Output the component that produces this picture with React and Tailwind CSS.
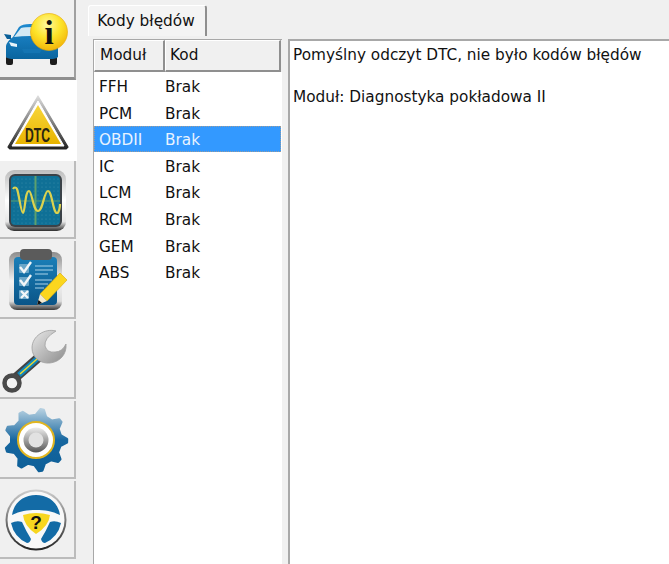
const modules = ['FFH', 'PCM', 'OBDII', 'IC', 'LCM', 'RCM', 'GEM', 'ABS'];

function CarIcon() {
  return (
    <svg width="76" height="78" viewBox="0 0 76 78">
      <defs>
        <linearGradient id="carBody" x1="0" y1="0" x2="0" y2="1">
          <stop offset="0" stopColor="#1f8ad0" />
          <stop offset="1" stopColor="#0a659f" />
        </linearGradient>
        <radialGradient id="infoBall" cx="0.45" cy="0.3" r="0.8">
          <stop offset="0" stopColor="#fff8a0" />
          <stop offset="0.45" stopColor="#fde42a" />
          <stop offset="1" stopColor="#efa800" />
        </radialGradient>
      </defs>
      <rect x="6" y="56" width="7" height="9" rx="2" fill="#1c1c1c" />
      <rect x="50" y="56" width="7" height="9" rx="2" fill="#1c1c1c" />
      <path d="M6 57 L6 46 Q7 41 13 37 L19 27 Q22 24 30 24 L44 24 L52 38 Q58 41 58 47 L58 57 Q56 59 50 59 L14 59 Q8 59 6 57 Z" fill="url(#carBody)" />
      <path d="M4 34 L11 35 L11 39 L7 39 Z" fill="#0a5f98" />
      <path d="M14 37 L21 28 Q25 27 33 27 L42 27 L46 37 Q30 35 14 37 Z" fill="#d4e9f4" />
      <path d="M9 42 L17 44 L17 47 L11 46 Z" fill="#e9f4fa" />
      <path d="M55 42 L47 44 L47 47 L53 46 Z" fill="#e9f4fa" />
      <path d="M22 49 L42 49 L40 53 L24 53 Z" fill="#1475b3" />
      <circle cx="49" cy="32" r="18.5" fill="url(#infoBall)" stroke="#e8a800" strokeWidth="0.6" />
      <text x="49" y="44" textAnchor="middle" fontFamily="'Liberation Serif', serif" fontWeight="700" fontSize="33" fill="#111">i</text>
    </svg>
  );
}

function DtcIcon() {
  return (
    <svg width="76" height="78" viewBox="0 0 76 78">
      <defs>
        <linearGradient id="dtcEdge" x1="0" y1="0" x2="0" y2="1">
          <stop offset="0" stopColor="#dcdcdc" />
          <stop offset="0.5" stopColor="#808080" />
          <stop offset="1" stopColor="#222" />
        </linearGradient>
        <linearGradient id="dtcFill" x1="0" y1="0" x2="0" y2="1">
          <stop offset="0" stopColor="#f8d63a" />
          <stop offset="1" stopColor="#e8b400" />
        </linearGradient>
      </defs>
      <path d="M38 14 L68 65 L66 67 L10 67 L8 65 Z" fill="url(#dtcEdge)" stroke="url(#dtcEdge)" strokeWidth="1.2" strokeLinejoin="round" />
      <path d="M38 19 L64 64 L12 64 Z" fill="#fff" stroke="#fff" strokeWidth="1" strokeLinejoin="round" />
      <path d="M38 23 L61 62 L15 62 Z" fill="url(#dtcFill)" />
      <text x="37.5" y="60" textAnchor="middle" fontFamily="'Liberation Sans', sans-serif" fontSize="21" fontWeight="700" textLength="25" lengthAdjust="spacingAndGlyphs" fill="#2a2510">DTC</text>
    </svg>
  );
}

function ScopeIcon() {
  return (
    <svg width="76" height="78" viewBox="0 0 76 78">
      <defs>
        <linearGradient id="scopeFrame" x1="0" y1="0" x2="0" y2="1">
          <stop offset="0" stopColor="#bdbdbd" />
          <stop offset="0.5" stopColor="#ffffff" />
          <stop offset="0.85" stopColor="#e6e6e6" />
          <stop offset="1" stopColor="#2c2c2c" />
        </linearGradient>
        <pattern id="scopeDots" width="4" height="4" patternUnits="userSpaceOnUse">
          <circle cx="2" cy="2" r="0.5" fill="#3f93ad" />
        </pattern>
      </defs>
      <rect x="5" y="9" width="61" height="61" rx="9" fill="url(#scopeFrame)" />
      <rect x="9" y="13" width="53" height="53" rx="6" fill="#3b4248" />
      <rect x="11" y="15" width="49" height="49" rx="4" fill="#0f7096" />
      <rect x="11" y="15" width="49" height="49" rx="4" fill="url(#scopeDots)" />
      <line x1="35.5" y1="15" x2="35.5" y2="64" stroke="#5ba06e" strokeWidth="2" />
      <line x1="11" y1="40" x2="60" y2="40" stroke="#5ba06e" strokeWidth="1" />
      <path d="M13 28 C14 26 16 26 17 28 C19 33 21 52 23 52 C25 52 25 30 29 30 C32 30 33 50 38 50 C43 50 44 30 48 30 C52 30 53 52 57 52 C59 52 60 46 60 43" fill="none" stroke="#dcd24e" strokeWidth="2.2" />
    </svg>
  );
}

function ChecklistIcon() {
  return (
    <svg width="76" height="78" viewBox="0 0 76 78">
      <defs>
        <linearGradient id="boardFrame" x1="0" y1="0" x2="0" y2="1">
          <stop offset="0" stopColor="#8d8d8d" />
          <stop offset="0.5" stopColor="#f2f2f2" />
          <stop offset="0.85" stopColor="#dddddd" />
          <stop offset="1" stopColor="#3a3a3a" />
        </linearGradient>
        <linearGradient id="boardBlue" x1="0" y1="0" x2="0" y2="1">
          <stop offset="0" stopColor="#1b7fb8" />
          <stop offset="1" stopColor="#0a5588" />
        </linearGradient>
      </defs>
      <rect x="9" y="11" width="53" height="58" rx="8" fill="url(#boardFrame)" />
      <rect x="14" y="16" width="43" height="48" rx="4" fill="url(#boardBlue)" />
      <rect x="20" y="8" width="32" height="11" rx="4" fill="#5b5b5b" />
      <rect x="19" y="23" width="10" height="9" rx="1" fill="#6aa6c8" />
      <rect x="19" y="36" width="10" height="9" rx="1" fill="#6aa6c8" />
      <rect x="19" y="49" width="10" height="9" rx="1" fill="#6aa6c8" />
      <path d="M20 26 L24 31 L31 21" fill="none" stroke="#f2f6f8" strokeWidth="2.4" />
      <path d="M20 39 L24 44 L31 34" fill="none" stroke="#f2f6f8" strokeWidth="2.4" />
      <path d="M21 50 L28 57 M28 50 L21 57" fill="none" stroke="#f2f6f8" strokeWidth="2.4" />
      <path d="M35 25 H53 M35 29 H53 M35 33 H48 M35 39 H52 M35 43 H48 M35 47 H44" stroke="#a9d2e8" strokeWidth="1.2" />
      <path d="M60 32 L67 39 L47 60 L40 53 Z" fill="#fbd61e" stroke="#dba800" strokeWidth="0.6" />
      <path d="M40 53 L47 60 L37 64 Z" fill="#f3ead0" />
      <path d="M38.5 59 L42 62 L37 64 Z" fill="#111" />
    </svg>
  );
}

function WrenchIcon() {
  return (
    <svg width="76" height="78" viewBox="0 0 76 78">
      <defs>
        <linearGradient id="wrenchHead" x1="0" y1="0" x2="1" y2="1">
          <stop offset="0" stopColor="#e8e8e8" />
          <stop offset="1" stopColor="#8c8c8c" />
        </linearGradient>
      </defs>
      <path d="M14 58 L38 37" stroke="#444" strokeWidth="9" strokeLinecap="round" />
      <path d="M19 54 L38 37" stroke="#0f86bc" strokeWidth="5.5" />
      <path d="M20 53 L37 38" stroke="#efd92c" strokeWidth="1.5" />
      <circle cx="12" cy="62" r="7.5" fill="none" stroke="#4a4a4a" strokeWidth="4.5" />
      <circle cx="12" cy="62" r="5" fill="#f4f4f4" />
      <path d="M56 10 C45 7 32 15 32 27 C32 37 41 43 50 42 C60 41 67 33 66 23 Q62 31 55 31 Q47 32 45 25 Q44 17 56 10 Z" fill="url(#wrenchHead)" stroke="#a0a0a0" strokeWidth="0.8" />
    </svg>
  );
}

function gearPath(cx, cy, outer, inner, count) {
  const points = [];
  const step = (Math.PI * 2) / count;
  for (let i = 0; i < count; i++) {
    const a = i * step + 0.2;
    const corners = [
      [a - step * 0.3, inner],
      [a - step * 0.08, outer],
      [a + step * 0.08, outer],
      [a + step * 0.3, inner],
    ];
    corners.forEach(([t, r]) => {
      points.push(`${(cx + Math.sin(t) * r).toFixed(1)} ${(cy - Math.cos(t) * r).toFixed(1)}`);
    });
  }
  return `M${points.join(' L')} Z`;
}

function GearIcon() {
  return (
    <svg width="76" height="78" viewBox="0 0 76 78">
      <defs>
        <linearGradient id="gearBlue" x1="0" y1="0" x2="0" y2="1">
          <stop offset="0" stopColor="#b4cfe0" />
          <stop offset="0.5" stopColor="#16669f" />
          <stop offset="1" stopColor="#0d5f98" />
        </linearGradient>
        <linearGradient id="gearRing" x1="0" y1="0" x2="0" y2="1">
          <stop offset="0" stopColor="#eeeeee" />
          <stop offset="1" stopColor="#555" />
        </linearGradient>
      </defs>
      <path d={gearPath(36, 39, 31, 25, 9)} fill="url(#gearBlue)" stroke="url(#gearBlue)" strokeWidth="2.5" strokeLinejoin="round" />
      <circle cx="36" cy="39" r="18" fill="#ffffff" stroke="#e0b520" strokeWidth="2" />
      <circle cx="36" cy="39" r="12.5" fill="url(#gearRing)" />
      <circle cx="36" cy="39" r="7.5" fill="#e2e2e2" />
    </svg>
  );
}

function WheelIcon() {
  return (
    <svg width="76" height="78" viewBox="0 0 76 78">
      <defs>
        <linearGradient id="wheelRim" x1="0" y1="0" x2="0" y2="1">
          <stop offset="0" stopColor="#cfcfcf" />
          <stop offset="1" stopColor="#222" />
        </linearGradient>
      </defs>
      <circle cx="36" cy="39" r="30.5" fill="url(#wheelRim)" />
      <circle cx="36" cy="39" r="28.5" fill="#f8f8f8" />
      <path d="M12 34 C14 21 24 14 36 14 C48 14 58 21 60 34 C52 30 45 29 36 29 C27 29 20 30 12 34 Z" fill="#136ba6" />
      <path d="M11 42 Q17 39 22 41 Q26 50 31 58 Q30 62 27 62 Q14 56 11 42 Z" fill="#136ba6" />
      <path d="M61 42 Q55 39 50 41 Q46 50 41 58 Q42 62 45 62 Q58 56 61 42 Z" fill="#136ba6" />
      <path d="M23 34 Q36 30 50 34 Q49 45 36 53 Q24 45 23 34 Z" fill="#f7d61f" />
      <text x="36" y="48" textAnchor="middle" fontFamily="'Liberation Sans', sans-serif" fontWeight="700" fontSize="19" fill="#111">?</text>
    </svg>
  );
}

function NavButton({ children, selected, tall }) {
  if (selected) {
    return <div className="h-[81px] w-[77px] bg-white pt-[2px]">{children}</div>;
  }
  return (
    <div className={`${tall ? 'h-[80px] border-b-[3px] border-b-[#8f8f8f] border-r-[#a0a0a0]' : 'h-[78px] border-b-2 border-b-[#bcbcbc] border-r-[#bcbcbc]'} w-[76px] border-r-2 bg-[#f0f0f0] overflow-hidden`}>
      {children}
    </div>
  );
}

export default function App() {
  return (
    <div className="flex h-[564px] w-[669px] overflow-hidden bg-[#f0f0f0] font-['DejaVu_Sans',sans-serif] text-[15.3px] text-[#111]">
      <div className="flex w-[77px] shrink-0 flex-col">
        <NavButton tall><CarIcon /></NavButton>
        <NavButton selected><DtcIcon /></NavButton>
        <div className="flex flex-col gap-[2px]">
          <NavButton><ScopeIcon /></NavButton>
          <NavButton><ChecklistIcon /></NavButton>
          <NavButton><WrenchIcon /></NavButton>
          <NavButton><GearIcon /></NavButton>
          <NavButton><WheelIcon /></NavButton>
        </div>
      </div>

      <div className="flex min-w-0 flex-1 flex-col pl-[11px] pt-[5px]">
        <div className="flex h-[31px] w-[119px] items-center justify-center self-start rounded-t-[3px] border-l border-r-2 border-t border-l-white border-r-[#8f8f8f] border-t-white bg-[#f4f4f4] pr-[2px]">
          Kody błędów
        </div>

        <div className="mt-[3px] flex min-h-0 flex-1 gap-[6px] pl-[5px]">
          <div className="w-[189px] shrink-0 border-l border-t border-[#a8a8a8] bg-white">
            <div className="flex h-[32px] bg-[#f0f0f0] pr-[1px]">
              <div className="flex w-[71px] items-center border-b-2 border-l border-r-2 border-t border-b-[#8f8f8f] border-l-white border-r-[#8f8f8f] border-t-white pl-[5px]">Moduł</div>
              <div className="flex w-[116px] items-center border-b-2 border-l border-r-2 border-t border-b-[#8f8f8f] border-l-white border-r-[#8f8f8f] border-t-white pl-[4px]">Kod</div>
            </div>
            <div className="pr-[1px] pt-[0.5px]">
              {modules.map((name) => (
                <div
                  key={name}
                  className={`flex h-[26.67px] items-center pl-[5px] pt-[3px] ${name === 'OBDII' ? 'bg-[#3399ff] text-[#e8f3ff] outline-1 -outline-offset-1 outline-dotted outline-[#9a9c9c]' : ''}`}
                >
                  <span className="w-[66px]">{name}</span>
                  <span>Brak</span>
                </div>
              ))}
            </div>
          </div>

          <div className="min-w-0 flex-1 border-l-2 border-t-2 border-[#a8a8a8] bg-white pl-[3px] pt-[4px] leading-[21px]">
            <p>Pomyślny odczyt DTC, nie było kodów błędów</p>
            <p className="mt-[21px]">Moduł: Diagnostyka pokładowa II</p>
          </div>
        </div>
      </div>
    </div>
  );
}
